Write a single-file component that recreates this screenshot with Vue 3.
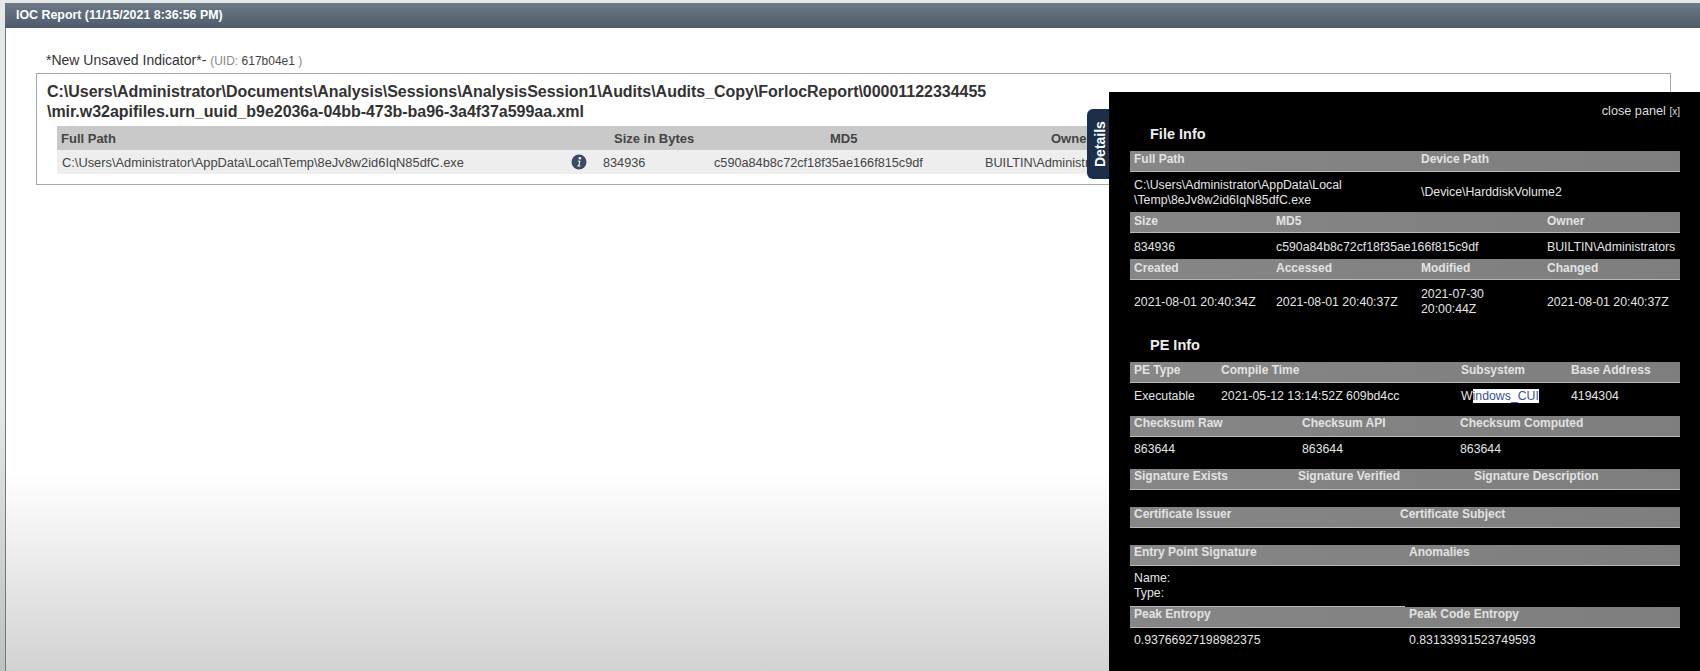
<template>
  <div class="page">
    <div class="titlebar">IOC Report (11/15/2021 8:36:56 PM)</div>

    <div class="content">
      <div class="indicator">
        *New Unsaved Indicator*-
        <span class="uid">(UID: <span class="uid-val">617b04e1</span> )</span>
      </div>

      <div class="report">
        <h2 class="report-path">
          C:\Users\Administrator\Documents\Analysis\Sessions\AnalysisSession1\Audits\Audits_Copy\ForlocReport\00001122334455<br />\mir.w32apifiles.urn_uuid_b9e2036a-04bb-473b-ba96-3a4f37a599aa.xml
        </h2>
        <div class="rep-row rep-head">
          <span>Full Path</span>
          <span>Size in Bytes</span>
          <span>MD5</span>
          <span>Owner</span>
        </div>
        <div class="rep-row rep-body">
          <span class="path-cell">
            C:\Users\Administrator\AppData\Local\Temp\8eJv8w2id6IqN85dfC.exe
            <svg class="info" viewBox="0 0 16 16" width="16" height="16">
              <circle cx="8" cy="8" r="7.5" fill="#3c4a66" />
              <circle cx="8.9" cy="4.2" r="1.3" fill="#fff" />
              <path d="M6.5 6.8h3L8.4 11.6h1.1l-.2.9H6.2l.2-.9h.9l.8-3.9h-.8z" fill="#fff" />
            </svg>
          </span>
          <span>834936</span>
          <span>c590a84b8c72cf18f35ae166f815c9df</span>
          <span class="nowrap">BUILTIN\Administrators</span>
        </div>
      </div>
    </div>

    <aside class="panel">
      <button class="tab"><span>Details</span></button>
      <div class="close">close panel <small>[x]</small></div>

      <h3 class="section first">File Info</h3>
      <div class="row file head">
        <span class="s2">Full Path</span>
        <span class="s2">Device Path</span>
      </div>
      <div class="row file val h40">
        <span class="s2">C:\Users\Administrator\AppData\Local<br />\Temp\8eJv8w2id6IqN85dfC.exe</span>
        <span class="s2">\Device\HarddiskVolume2</span>
      </div>
      <div class="row file head low">
        <span>Size</span>
        <span class="s2">MD5</span>
        <span>Owner</span>
      </div>
      <div class="row file val h26">
        <span>834936</span>
        <span class="s2">c590a84b8c72cf18f35ae166f815c9df</span>
        <span class="nowrap">BUILTIN\Administrators</span>
      </div>
      <div class="row file head low">
        <span>Created</span>
        <span>Accessed</span>
        <span>Modified</span>
        <span>Changed</span>
      </div>
      <div class="row file val h44">
        <span>2021-08-01 20:40:34Z</span>
        <span>2021-08-01 20:40:37Z</span>
        <span>2021-07-30<br />20:00:44Z</span>
        <span>2021-08-01 20:40:37Z</span>
      </div>

      <h3 class="section">PE Info</h3>
      <div class="row pe head">
        <span>PE Type</span>
        <span>Compile Time</span>
        <span>Subsystem</span>
        <span>Base Address</span>
      </div>
      <div class="row pe val h33">
        <span>Executable</span>
        <span>2021-05-12 13:14:52Z 609bd4cc</span>
        <span>W<mark>indows_CUI</mark></span>
        <span>4194304</span>
      </div>
      <div class="row checksum head high">
        <span>Checksum Raw</span>
        <span>Checksum API</span>
        <span>Checksum Computed</span>
      </div>
      <div class="row checksum val h32">
        <span>863644</span>
        <span>863644</span>
        <span>863644</span>
      </div>
      <div class="row sig head high">
        <span>Signature Exists</span>
        <span>Signature Verified</span>
        <span>Signature Description</span>
      </div>
      <div class="spacer"></div>
      <div class="row cert head high">
        <span>Certificate Issuer</span>
        <span>Certificate Subject</span>
      </div>
      <div class="spacer"></div>
      <div class="row half head high">
        <span>Entry Point Signature</span>
        <span>Anomalies</span>
      </div>
      <div class="row half val h41">
        <span>Name:<br />Type:</span>
      </div>
      <div class="row half head high lined">
        <span>Peak Entropy</span>
        <span>Peak Code Entropy</span>
      </div>
      <div class="row half val h26b">
        <span>0.93766927198982375</span>
        <span>0.83133931523749593</span>
      </div>
    </aside>
  </div>
</template>

<script setup>
</script>

<style>
html, body {
  margin: 0;
  height: 100%;
  overflow: hidden;
}
</style>

<style scoped>
.page {
  position: relative;
  width: 1700px;
  height: 671px;
  box-sizing: border-box;
  overflow: hidden;
  padding-top: 3px;
  font-family: "Liberation Sans", Arial, sans-serif;
  background: linear-gradient(180deg, #e4e8e6 0, #e4e8e6 60%, #bcc2c2 100%);
}
.titlebar {
  margin-left: 5px;
  height: 25px;
  line-height: 25px;
  padding-left: 11px;
  font-size: 12.4px;
  font-weight: bold;
  color: #fff;
  background: linear-gradient(180deg, #6d7b88 0, #4c5a6a 100%);
}
.content {
  margin-left: 5px;
  height: 643px;
  box-sizing: border-box;
  border-left: 1px solid #777;
  padding: 24px 29px 0 30px;
  background: linear-gradient(180deg, #fff 0, #fff 445px, #d2d2d2 100%);
}
.indicator {
  margin-left: 10px;
  font-size: 14px;
  line-height: 16px;
  color: #333;
}
.uid {
  font-size: 12px;
  color: #888;
}
.uid-val {
  color: #444;
}
.report {
  margin-top: 4px;
  height: 112px;
  box-sizing: border-box;
  border: 1px solid #a8a8a8;
  padding: 8px 0 0 10px;
}
.report-path {
  margin: 0;
  font-size: 16px;
  line-height: 20px;
  font-weight: bold;
  letter-spacing: -0.03px;
  color: #333;
}
.rep-row {
  display: grid;
  margin: 0 0 0 10px;
  height: 24px;
  align-items: center;
  white-space: nowrap;
}
.rep-head {
  grid-template-columns: 557px 216px 221px 1fr;
  margin-top: 4px;
  background: #c9c9c9;
  font-size: 13px;
  font-weight: bold;
  color: #444;
}
.rep-head > :first-child {
  padding-left: 4px;
}
.rep-body {
  grid-template-columns: 546px 111px 271px 1fr;
  box-sizing: border-box;
  padding-top: 1px;
  background: #eeeeee;
  font-size: 12.7px;
  color: #444;
}
.path-cell {
  position: relative;
  padding-left: 5px;
  font-size: 12.85px;
}
.info {
  position: absolute;
  left: 514px;
  top: -1px;
}

.panel {
  position: absolute;
  left: 1109px;
  top: 92px;
  width: 591px;
  height: 579px;
  box-sizing: border-box;
  padding: 0 20px 0 21px;
  background: #000;
  color: #eee;
}
.tab {
  position: absolute;
  left: -22px;
  top: 17px;
  width: 22px;
  height: 70px;
  padding: 0 0 0 2px;
  border: 0;
  border-radius: 6px 0 0 6px;
  background: #1b3048;
  color: #fff;
  font: bold 14px "Liberation Sans", Arial, sans-serif;
}
.tab span {
  display: block;
  writing-mode: vertical-rl;
  transform: rotate(180deg);
  margin: 0 auto;
  line-height: 22px;
  text-align: center;
  height: 70px;
}
.close {
  height: 32px;
  padding-top: 11px;
  box-sizing: border-box;
  text-align: right;
  font-size: 12.7px;
  line-height: 16px;
  color: #ddd;
}
.close small {
  font-size: 10px;
}
.section {
  margin: 0;
  padding-left: 20px;
  font-size: 14.5px;
  line-height: 21px;
  font-weight: bold;
  color: #eee;
}
.section.first {
  height: 27px;
}
.section:not(.first) {
  height: 38px;
  padding-top: 11px;
  box-sizing: border-box;
}
.row {
  display: grid;
  align-items: center;
  white-space: nowrap;
  padding-left: 4px;
}
.head {
  height: 21px;
  box-sizing: border-box;
  padding-bottom: 5px;
  border-bottom: 1px solid #b8b8b8;
  background: linear-gradient(90deg, #868686, #7e7e7e);
  font-size: 12px;
  font-weight: bold;
  color: #e2e2e2;
}
.head.low { padding-bottom: 3px; }
.head.high { padding-bottom: 6px; }
.val {
  box-sizing: border-box;
  font-size: 12.3px;
  line-height: 15px;
  color: #e4e4e4;
}
.h26 { height: 26px; padding-top: 3px; }
.h26b { height: 26px; padding-bottom: 1px; }
.h32 { height: 32px; padding-bottom: 7px; }
.h33 { height: 33px; padding-bottom: 7px; }
.h40 { height: 40px; padding-top: 1px; }
.h41 { height: 41px; padding-bottom: 2px; }
.h44 { height: 44px; }
.s2 { grid-column: span 2; }
.file { grid-template-columns: 142px 145px 126px 1fr; }
.pe { grid-template-columns: 87px 240px 110px 1fr; }
.checksum { grid-template-columns: 168px 158px 1fr; }
.sig { grid-template-columns: 164px 176px 1fr; }
.cert { grid-template-columns: 266px 1fr; }
.half { grid-template-columns: 275px 1fr; }
.spacer { height: 17px; }
.lined {
  position: relative;
}
.lined::before {
  content: "";
  position: absolute;
  left: 0;
  top: -1px;
  width: 275px;
  height: 1px;
  background: #b8b8b8;
}
mark {
  background: #fff;
  color: #3c4fa0;
}
.nowrap {
  white-space: nowrap;
}
</style>
